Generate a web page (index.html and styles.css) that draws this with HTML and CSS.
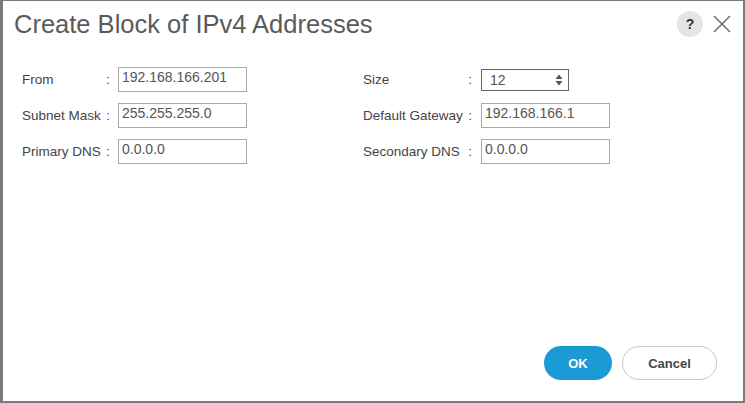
FILE: index.html
```html
<!DOCTYPE html>
<html lang="en">
<head>
    <meta charset="UTF-8">
    <title>Create Block of IPv4 Addresses</title>
    <link rel="stylesheet" href="styles.css">
</head>
<body>
    <div class="dialog">
        <header class="dialog-header">
            <h1>Create Block of IPv4 Addresses</h1>
            <div class="header-tools">
                <span class="help">?</span>
                <svg class="close" width="18" height="18" viewBox="0 0 18 18">
                    <path d="M1 1 L17 17 M17 1 L1 17" stroke="#6b6b6b" stroke-width="1.5" fill="none"/>
                </svg>
            </div>
        </header>

        <main class="form">
            <div class="col">
                <div class="row">
                    <label class="lbl"><span>From</span><span>:</span></label>
                    <input class="field" type="text" value="192.168.166.201">
                </div>
                <div class="row">
                    <label class="lbl"><span>Subnet Mask</span><span>:</span></label>
                    <input class="field" type="text" value="255.255.255.0">
                </div>
                <div class="row">
                    <label class="lbl"><span>Primary DNS</span><span>:</span></label>
                    <input class="field" type="text" value="0.0.0.0">
                </div>
            </div>
            <div class="col col-right">
                <div class="row">
                    <label class="lbl"><span>Size</span><span>:</span></label>
                    <div class="spinner">
                        <span>12</span>
                        <svg width="8" height="12" viewBox="0 0 8 12">
                            <path d="M4 0.5 L7.5 5 L0.5 5 Z M4 11.5 L7.5 7 L0.5 7 Z" fill="#555"/>
                        </svg>
                    </div>
                </div>
                <div class="row">
                    <label class="lbl"><span>Default Gateway</span><span>:</span></label>
                    <input class="field" type="text" value="192.168.166.1">
                </div>
                <div class="row">
                    <label class="lbl"><span>Secondary DNS</span><span>:</span></label>
                    <input class="field" type="text" value="0.0.0.0">
                </div>
            </div>
        </main>

        <footer class="dialog-footer">
            <button class="btn btn-ok">OK</button>
            <button class="btn btn-cancel">Cancel</button>
        </footer>
    </div>
</body>
</html>
```

FILE: styles.css
```css
html, body {
    margin: 0;
    padding: 0;
    background-color: #ffffff;
}

body {
    font-family: "Liberation Sans", Arial, sans-serif;
    color: #4a4a4a;
}

.dialog {
    box-sizing: border-box;
    width: 745px;
    height: 403px;
    border-style: solid;
    border-color: #7b7b7b;
    border-width: 1px 2px 2px 3px;
    display: flex;
    flex-direction: column;
}

.dialog-header {
    display: flex;
    justify-content: space-between;
    align-items: center;
    height: 46px;
    padding: 0 12px 0 11px;
}

h1 {
    margin: 0;
    font-size: 25.5px;
    font-weight: normal;
    color: #5a5a5a;
}

.header-tools {
    display: flex;
    align-items: center;
    gap: 10px;
}

.help {
    width: 26px;
    height: 26px;
    border-radius: 50%;
    background-color: #e4e4e4;
    color: #333333;
    font-weight: bold;
    font-size: 14px;
    display: flex;
    align-items: center;
    justify-content: center;
}

.close {
    display: block;
}

/* formulario */
.form {
    display: flex;
    padding: 20px 0 0 19px;
}

.col {
    display: flex;
    flex-direction: column;
    gap: 11px;
    width: 341px;
}

.row {
    display: flex;
    align-items: center;
    height: 25px;
}

.lbl {
    display: flex;
    justify-content: space-between;
    width: 96px;
    padding-right: 8px;
    box-sizing: border-box;
    font-size: 13.5px;
    color: #454545;
}

.col-right .lbl {
    width: 118px;
    padding-right: 9px;
}

.field {
    box-sizing: border-box;
    width: 129px;
    height: 25px;
    border: 1px solid #a9a9a9;
    padding: 0 3px 6px;
    font-family: "Liberation Sans", Arial, sans-serif;
    font-size: 14px;
    color: #555555;
    outline: none;
}

.spinner {
    box-sizing: border-box;
    width: 88px;
    height: 22px;
    border: 1px solid #666666;
    display: flex;
    align-items: center;
    justify-content: space-between;
    padding: 0 5px 0 8px;
    font-size: 14px;
    color: #555555;
}

.spinner svg {
    display: block;
}

/* botoes */
.dialog-footer {
    margin-top: auto;
    display: flex;
    justify-content: flex-end;
    gap: 10px;
    padding: 0 26px 21px 0;
}

.btn {
    height: 34px;
    border-radius: 17px;
    font-family: "Liberation Sans", Arial, sans-serif;
    font-weight: bold;
    font-size: 13px;
    cursor: pointer;
}

.btn-ok {
    width: 68px;
    border: none;
    background-color: #1b9ad6;
    color: #ffffff;
}

.btn-cancel {
    width: 95px;
    border: 1px solid #c6c6c6;
    background-color: #ffffff;
    color: #444444;
}
```
